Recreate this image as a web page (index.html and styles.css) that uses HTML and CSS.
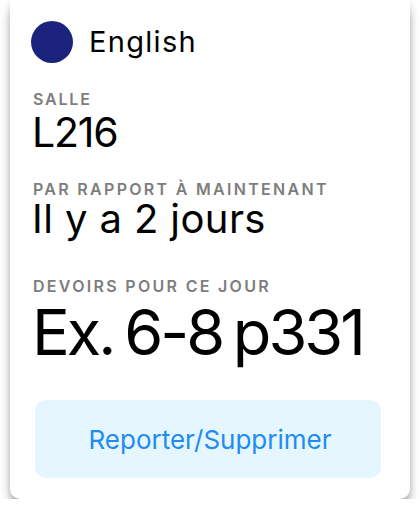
FILE: index.html
```html
<!DOCTYPE html>
<html lang="fr">
<head>
<meta charset="utf-8">
<link rel="stylesheet" href="styles.css">
</head>
<body>
<div class="card">
  <div class="header">
    <span class="dot"></span>
    <span class="subject">English</span>
  </div>
  <div class="label l1">SALLE</div>
  <div class="value v1">L216</div>
  <div class="label l2">PAR RAPPORT À MAINTENANT</div>
  <div class="value v2">Il y a 2 jours</div>
  <div class="label l3">DEVOIRS POUR CE JOUR</div>
  <div class="value big">Ex. 6-8 p331</div>
  <button class="action">Reporter/Supprimer</button>
</div>
</body>
</html>
```
FILE: styles.css
```css
html, body {
  margin: 0;
  padding: 0;
  background: #ffffff;
}
body {
  font-family: "Inter", "Roboto", sans-serif;
  color: #000;
}
.card {
  margin: 0 10px;
  width: 400px;
  box-sizing: border-box;
  background: #fff;
  border-radius: 0 0 10px 10px;
  box-shadow: 0 9px 12px -2px rgba(0,0,0,0.42), 0 0 6px rgba(0,0,0,0.1);
  padding: 21px 0 21px 21px;
}
.header {
  display: flex;
  align-items: center;
  gap: 16px;
  height: 42px;
}
.dot {
  width: 42px;
  height: 42px;
  border-radius: 50%;
  background: #1b237d;
  flex: none;
}
.subject {
  font-size: 29px;
  line-height: 42px;
  letter-spacing: 1.3px;
}
.label {
  font-size: 16px;
  line-height: 16px;
  font-weight: 600;
  letter-spacing: 2.3px;
  color: #7d7d7d;
  padding-left: 2px;
  white-space: nowrap;
}
.l1 { margin-top: 28px; letter-spacing: 1.8px; }
.l2 { margin-top: 27px; }
.l3 { margin-top: 37px; }
.value {
  font-size: 41px;
  line-height: 44px;
  padding-left: 1px;
  white-space: nowrap;
}
.v1 { margin-top: 3px; letter-spacing: -1.2px; }
.v2 { margin-top: 0; font-size: 40px; letter-spacing: 0.4px; }
.big {
  font-size: 63px;
  line-height: 64px;
  margin-top: 6px;
  letter-spacing: -3px;
  word-spacing: -4px;
}
.action {
  display: flex;
  align-items: center;
  justify-content: center;
  margin: 36px 0 0 4px;
  width: 346px;
  height: 78px;
  border: none;
  border-radius: 11px;
  background: #e5f6fe;
  color: #1e8cf2;
  font-family: "Inter", "Roboto", sans-serif;
  font-size: 26px;
  padding: 0 0 0 4px;
}
```
